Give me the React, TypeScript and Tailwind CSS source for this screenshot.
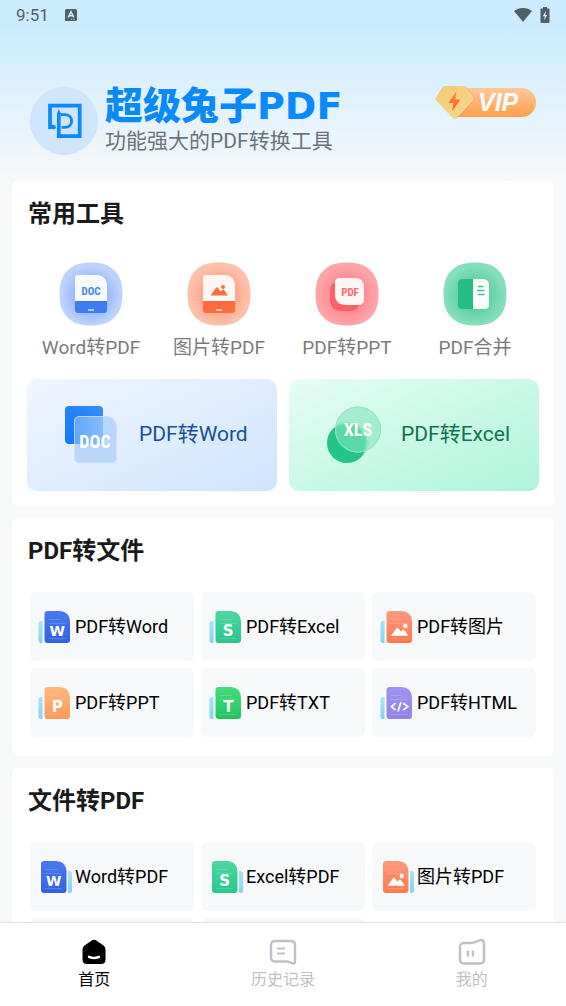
import type { ReactNode } from "react"

type Tone = "word" | "excel" | "image" | "ppt" | "txt" | "html"

interface FileTool {
  label: string
  tone: Tone
}

const TONES: Record<Tone, { from: string; to: string; letter?: string }> = {
  word: { from: "#4a78ee", to: "#3262e2", letter: "W" },
  excel: { from: "#4fd7a3", to: "#28c68c", letter: "S" },
  image: { from: "#ff9a80", to: "#fd7a4c" },
  ppt: { from: "#ffb97f", to: "#fb9a58", letter: "P" },
  txt: { from: "#45dc7c", to: "#1fc661", letter: "T" },
  html: { from: "#a195f2", to: "#8f82ea" },
}

const FROM_PDF: FileTool[] = [
  { label: "PDF转Word", tone: "word" },
  { label: "PDF转Excel", tone: "excel" },
  { label: "PDF转图片", tone: "image" },
  { label: "PDF转PPT", tone: "ppt" },
  { label: "PDF转TXT", tone: "txt" },
  { label: "PDF转HTML", tone: "html" },
]

const TO_PDF: FileTool[] = [
  { label: "Word转PDF", tone: "word" },
  { label: "Excel转PDF", tone: "excel" },
  { label: "图片转PDF", tone: "image" },
  { label: "PPT转PDF", tone: "ppt" },
  { label: "TXT转PDF", tone: "txt" },
]

const NARROW = "'Roboto Condensed', 'Liberation Sans Narrow', 'DejaVu Sans Condensed', sans-serif"

function StatusBar() {
  return (
    <div className="flex h-[30px] items-center justify-between px-4 text-[#4e5f68]">
      <div className="flex items-center gap-4">
        <span className="text-[17px] leading-6">9:51</span>
        <svg width="12" height="12" viewBox="0 0 12 12" aria-hidden="true">
          <rect width="12" height="12" rx="1.5" fill="#4e5f68" />
          <path d="M3.2 8.4 6 2.6l2.8 5.8M4.3 6.8h3.4" fill="none" stroke="#d3eefd" strokeWidth="1.4" />
          <path d="M6 10.4h1.2M8.4 10.4h1.2" stroke="#d3eefd" strokeWidth=".8" />
        </svg>
      </div>
      <div className="flex items-center gap-2">
        <svg width="18" height="14" viewBox="0 0 18 14" aria-hidden="true">
          <path d="M0 3C5-1 13-1 18 3L9 14Z" fill="#4e5f68" />
        </svg>
        <svg width="10" height="16" viewBox="0 0 10 16" aria-hidden="true">
          <path d="M3 0h4v1.6h1.6q.9 0 .9.9v12.6q0 .9-.9.9H1.4q-.9 0-.9-.9V2.500q0-.9.9-.9H3z" fill="#4e5f68" />
          <path d="M5.800 4 2.800 9.200h1.900L4.200 13.300l3-5.300H5.300z" fill="#d3eefd" />
        </svg>
      </div>
    </div>
  )
}

function Logo() {
  return (
    <svg width="68" height="68" viewBox="0 0 68 68" className="shrink-0" aria-hidden="true">
      <circle cx="34" cy="34" r="34" fill="#cfe5fb" />
      <path d="M25.500 40.200H20V18.700H49.700V49.200H28.800V26" fill="none" stroke="#0a89fb" strokeWidth="3.700" />
      <path d="M26.800 27.500 28.600 22l3 5.500z" fill="#0a89fb" />
      <path d="M22.500 37.200 26 40.600l-3.500 2z" fill="#0a89fb" />
      <path d="M31 27.600H34.500C44 27.600 44 40.400 34.500 40.400H31.500" fill="none" stroke="#0a89fb" strokeWidth="2.900" />
    </svg>
  )
}

function VipBadge() {
  return (
    <button type="button" aria-label="VIP" className="shrink-0">
      <svg width="101" height="34" viewBox="0 0 101 34" aria-hidden="true">
        <defs>
          <linearGradient id="vip-pill" x1="0" y1="0" x2="0" y2="1">
            <stop offset="0" stopColor="#ffc79a" />
            <stop offset="1" stopColor="#fd9f4a" />
          </linearGradient>
          <linearGradient id="vip-gem" x1="0" y1="0" x2="1" y2="1">
            <stop offset="0" stopColor="#f3c977" />
            <stop offset="1" stopColor="#f7d98e" />
          </linearGradient>
          <linearGradient id="vip-bolt" x1="0" y1="0" x2="0" y2="1">
            <stop offset="0" stopColor="#ff8a3c" />
            <stop offset="1" stopColor="#fb5f20" />
          </linearGradient>
        </defs>
        <path d="M22 3H86.500a14.500 14.500 0 0 1 0 29H22z" fill="url(#vip-pill)" />
        <path
          d="M10.500 1H29.500q1.500 0 2.500 1.200L39.600 12.200q1.200 1.600 0 3.200L23.500 32.400Q20.500 35 17.500 32.400L1.400 15.400q-1.200-1.600 0-3.200L8 2.200Q9 1 10.500 1z"
          fill="#e58d3c"
          opacity=".35"
        />
        <path
          d="M10 1H28.500q1.500 0 2.500 1.200L38.400 12q1.200 1.600 0 3.200L22.500 32.200Q19.800 34.500 17 32.200L1.400 15.200q-1.200-1.600 0-3.200L7.500 2.200Q8.500 1 10 1z"
          fill="url(#vip-gem)"
        />
        <path d="M21.500 6 13.500 18h5L17 26.500 25.300 14.500h-5z" fill="url(#vip-bolt)" />
        <text
          x="43"
          y="26"
          fill="#fff"
          fontSize="25"
          fontWeight="700"
          fontStyle="italic"
          fontFamily="'Liberation Sans', sans-serif"
        >
          VIP
        </text>
      </svg>
    </button>
  )
}

function Blob({ id, inner, outer, children }: { id: string; inner: string; outer: string; children: ReactNode }) {
  return (
    <svg width="64" height="64" viewBox="0 0 64 64" aria-hidden="true">
      <defs>
        <radialGradient id={id} cx=".5" cy=".52" r=".52">
          <stop offset=".3" stopColor={inner} />
          <stop offset=".9" stopColor={outer} />
        </radialGradient>
      </defs>
      <path
        d="M32 .5C42 .5 49.500 2.500 55.500 8.500S63.500 22 63.500 32 61.500 49.500 55.500 55.500 42 63.500 32 63.500 14.500 61.500 8.500 55.500.5 42 .5 32 2.500 14.500 8.500 8.500 22 .5 32 .5z"
        fill={`url(#${id})`}
      />
      {children}
    </svg>
  )
}

function DocIcon() {
  return (
    <Blob id="blob-doc" inner="#86adf8" outer="#bdd2fc">
      <path d="M19 13h18q11 0 11 12v15H16V16q0-3 3-3z" fill="#f7f9ff" />
      <path d="M16 39h32v9q0 3-3 3H19q-3 0-3-3z" fill="#3f7bf0" />
      <path d="M29 48h6" stroke="#fff" strokeWidth="1.200" />
      <text x="32" y="33" textAnchor="middle" fill="#4a83ee" fontSize="11" fontWeight="700" fontFamily={NARROW}>
        DOC
      </text>
    </Blob>
  )
}

function PictureIcon() {
  return (
    <Blob id="blob-picture" inner="#fb9c7d" outer="#fec0aa">
      <path d="M19 13h18q11 0 11 12v15H16V16q0-3 3-3z" fill="#fff7f4" />
      <path d="M16 39h32v9q0 3-3 3H19q-3 0-3-3z" fill="#fb6b3e" />
      <path d="M29 48h6" stroke="#fff" strokeWidth="1.200" />
      <path d="M23.500 33.500 29 25.800q1-1.200 2 0l2.600 3.800 1.700-1.700q.9-.8 1.700.2L41 33.500z" fill="#f9703f" />
      <circle cx="36" cy="25" r="2" fill="#f9703f" />
    </Blob>
  )
}

function PptIcon() {
  return (
    <Blob id="blob-ppt" inner="#fb8186" outer="#ffa4a8">
      <path d="M15 29q0-9 9-9h20v20q0 9-9 9H27q-12 0-12-12z" fill="#fb5f68" />
      <path d="M25 16h15q9 0 9 9v12q0 6-6 6H31q-11 0-11-11V21q0-5 5-5z" fill="#fff5f5" />
      <text x="35" y="34" textAnchor="middle" fill="#f76a72" fontSize="11" fontWeight="700" fontFamily={NARROW}>
        PDF
      </text>
    </Blob>
  )
}

function MergeIcon() {
  return (
    <Blob id="blob-merge" inner="#55cba0" outer="#85dfbb">
      <path d="M19 17h11v30H19q-4 0-4-4V21q0-4 4-4z" fill="#24bd85" />
      <path d="M30 17h10q6 0 6 6v20q0 4-4 4H30z" fill="#f8fffc" />
      <path d="M35 24.500h5.500M34 28.500h7.500M35 32.500h6.500" stroke="#3cc092" strokeWidth="1.500" />
    </Blob>
  )
}

function FeatureDocIcon() {
  return (
    <svg width="56" height="60" viewBox="0 0 56 60" aria-hidden="true">
      <defs>
        <linearGradient id="feature-doc" x1="0" y1="1" x2="1" y2="0">
          <stop offset="0" stopColor="#1278fb" />
          <stop offset="1" stopColor="#358df8" />
        </linearGradient>
        <linearGradient id="feature-doc-mix" x1="0" y1="0" x2="1" y2="0">
          <stop offset="0" stopColor="#63a7fb" />
          <stop offset="1" stopColor="#86bbfb" />
        </linearGradient>
      </defs>
      <rect x="0" y="1" width="38" height="38" rx="4" fill="url(#feature-doc)" />
      <path d="M15 11h24q13 0 13 13v28q0 6-6 6H15q-6 0-6-6V17q0-6 6-6z" fill="#b8d7fb" />
      <path d="M15 11h23v28H9V17q0-6 6-6z" fill="url(#feature-doc-mix)" />
      <path
        d="M15 11.500h23q13.500 0 13.500 13v27.500q0 5.500-5.500 5.500H15q-5.500 0-5.500-5.500V17q0-5.500 5.500-5.500z"
        fill="none"
        stroke="#cfe3fd"
        strokeOpacity=".7"
      />
      <text x="30" y="43" textAnchor="middle" fill="#fff" fontSize="18" fontWeight="700" fontFamily={NARROW}>
        DOC
      </text>
    </svg>
  )
}

function FeatureXlsIcon() {
  return (
    <svg width="56" height="60" viewBox="0 0 56 60" aria-hidden="true">
      <defs>
        <clipPath id="feature-xls-clip">
          <circle cx="31" cy="24.500" r="23" />
        </clipPath>
        <filter id="feature-xls-soft">
          <feGaussianBlur stdDeviation="1.500" />
        </filter>
      </defs>
      <circle cx="20" cy="38" r="20" fill="#25c489" />
      <circle cx="31" cy="24.500" r="23" fill="#a4edd0" />
      <g clipPath="url(#feature-xls-clip)">
        <circle cx="20" cy="38" r="20" fill="#5ad8a9" filter="url(#feature-xls-soft)" />
      </g>
      <circle cx="31" cy="24.500" r="22.500" fill="none" stroke="#8fe6c3" />
      <text x="31" y="31" textAnchor="middle" fill="#fff" fontSize="18" fontWeight="700" fontFamily={NARROW}>
        XLS
      </text>
    </svg>
  )
}

function FileIcon({ tone, id, flipped }: { tone: Tone; id: string; flipped: boolean }) {
  const { from, to, letter } = TONES[tone]
  return (
    <svg width="37" height="32" viewBox="0 0 37 32" className="shrink-0" aria-hidden="true">
      <defs>
        <linearGradient id={id} x1="0" y1="0" x2="0" y2="1">
          <stop offset="0" stopColor={from} />
          <stop offset="1" stopColor={to} />
        </linearGradient>
        <linearGradient id={`${id}-bar`} x1="0" y1="0" x2="0" y2="1">
          <stop offset="0" stopColor="#a9e4f7" />
          <stop offset="1" stopColor="#84d3f1" />
        </linearGradient>
      </defs>
      {flipped ? (
        <path d="M30 10h1.500q2.500 0 2.500 2.500v17q0 2.500-2.500 2.500H30z" fill={`url(#${id}-bar)`} />
      ) : (
        <path d="M4.500 10H3Q.5 10 .5 12.500v17Q.5 32 3 32h1.500z" fill={`url(#${id}-bar)`} />
      )}
      <g transform={flipped ? "translate(3 0)" : "translate(6.500 0)"}>
        <path d="M3 0h12.500q10 1 10 10.500v18.500q0 3-3 3H3q-3 0-3-3V3q0-3 3-3z" fill={`url(#${id})`} />
        <path d="M4 8.500h12M4 12.500h17M4 27.500h17" stroke="#fff" strokeOpacity=".16" />
        {letter && (
          <text
            x="12.750"
            y="25"
            textAnchor="middle"
            fill="#fff"
            fontSize={letter === "W" ? 14 : 15}
            fontWeight="700"
            fontFamily="'DejaVu Sans', sans-serif"
          >
            {letter}
          </text>
        )}
        {tone === "image" && (
          <>
            <path d="M4.500 24.800 10 17.200q.9-1.100 1.800 0l2.700 3.600 1.400-1.700q.9-1 1.800 0L22 24.800z" fill="#fff" />
            <circle cx="18.800" cy="15" r="2.200" fill="#fff" />
          </>
        )}
        {tone === "html" && (
          <path
            d="m9 16.200-4 3.400 4 3.400m7.800-6.800 4.500 3.400-4.500 3.400M14.500 15l-3 9.500"
            fill="none"
            stroke="#fff"
            strokeWidth="1.700"
          />
        )}
      </g>
    </svg>
  )
}

function Section({ title, children }: { title: string; children: ReactNode }) {
  return (
    <section className="rounded-md bg-white pt-[21px]">
      <h2 className="px-4 text-2xl leading-6 font-bold text-[#1a1a1a]">{title}</h2>
      {children}
    </section>
  )
}

function FileGrid({ tools, name, flipped = false }: { tools: FileTool[]; name: string; flipped?: boolean }) {
  return (
    <div className="mt-[29px] grid grid-cols-3 gap-[7px] px-[18px] pb-[19px]">
      {tools.map((tool) => (
        <button
          key={tool.label}
          type="button"
          className="flex h-[69px] items-center rounded-md bg-[#f7f8fa] pl-2 text-lg leading-6 whitespace-nowrap text-black"
        >
          <FileIcon tone={tool.tone} id={`${name}-${tool.tone}`} flipped={flipped} />
          {tool.label}
        </button>
      ))}
    </div>
  )
}

function QuickTool({ label, icon }: { label: string; icon: ReactNode }) {
  return (
    <button type="button" className="flex flex-col items-center gap-[10px] text-[19px] leading-6 text-[#7b7b7b]">
      {icon}
      {label}
    </button>
  )
}

function NavItem({ label, active = false, children }: { label: string; active?: boolean; children: ReactNode }) {
  return (
    <a
      href="#"
      aria-current={active ? "page" : undefined}
      className={`flex flex-1 flex-col items-center gap-[3px] pt-4 text-base leading-6 ${active ? "text-black" : "text-[#bfbfc7]"}`}
    >
      <svg width="28" height="26" viewBox="0 0 28 26" fill="none" aria-hidden="true">
        {children}
      </svg>
      {label}
    </a>
  )
}

export default function App() {
  return (
    <div className="flex h-screen flex-col bg-[#f7f8fa] font-[Roboto,'Noto_Sans_CJK_SC',sans-serif]">
      <main className="min-h-0 flex-1 overflow-y-auto [scrollbar-width:none]">
        <header className="bg-linear-to-b from-[#cbecff] from-15% to-[#f7f8fa] pb-6">
          <StatusBar />
          <div className="flex items-start px-[30px] pt-[55px]">
            <div className="flex flex-1 items-center gap-[7px]">
              <Logo />
              <div>
                <h1 className="h-9 font-['Noto_Sans_CJK_SC',sans-serif] text-[38px] leading-9 font-black whitespace-nowrap text-[#0a89fb]">
                  超级兔子<span className="font-['DejaVu_Sans',sans-serif] leading-none">PDF</span>
                </h1>
                <p className="mt-1 text-[21px] leading-8 whitespace-nowrap text-[#6c7378]">功能强大的PDF转换工具</p>
              </div>
            </div>
            <VipBadge />
          </div>
        </header>

        <div className="flex flex-col gap-3 px-3">
          <Section title="常用工具">
            <div className="mt-9 grid grid-cols-4 px-[15px]">
              <QuickTool label="Word转PDF" icon={<DocIcon />} />
              <QuickTool label="图片转PDF" icon={<PictureIcon />} />
              <QuickTool label="PDF转PPT" icon={<PptIcon />} />
              <QuickTool label="PDF合并" icon={<MergeIcon />} />
            </div>
            <div className="mt-[19px] grid grid-cols-2 gap-3 px-[15px] pb-[15px]">
              <button
                type="button"
                className="flex h-28 items-center gap-[18px] rounded-[10px] bg-linear-to-br from-[#f0f6ff] to-[#cfe5fe] pl-[38px] text-[21px] text-[#174f9c]"
              >
                <FeatureDocIcon />
                PDF转Word
              </button>
              <button
                type="button"
                className="flex h-28 items-center gap-[18px] rounded-[10px] bg-linear-to-br from-[#e6fdf5] to-[#aef4da] pl-[38px] text-[21px] text-[#0f7350]"
              >
                <FeatureXlsIcon />
                PDF转Excel
              </button>
            </div>
          </Section>

          <Section title="PDF转文件">
            <FileGrid tools={FROM_PDF} name="from-pdf" />
          </Section>

          <Section title="文件转PDF">
            <FileGrid tools={TO_PDF} name="to-pdf" flipped />
          </Section>
        </div>
      </main>

      <nav className="flex h-[84px] shrink-0 border-t border-[#e3e3e8] bg-white">
        <NavItem label="首页" active>
          <path
            d="M11.800 1.500Q14 .2 16.200 1.500L23.500 6.500Q25.500 8 25.500 10.500V20.500Q25.500 25 21 25H7Q2.500 25 2.500 20.500V10.500Q2.500 8 4.500 6.500z"
            fill="#000"
          />
          <path d="M9 17.800q5 2.400 10 0" stroke="#fff" strokeWidth="2.400" strokeLinecap="round" />
        </NavItem>
        <NavItem label="历史记录">
          <path
            d="M6 2H22Q26 2 26 6V22.500Q26 25.200 23.500 24.400L18.500 22.500H6Q2 22.500 2 18.500V6Q2 2 6 2z"
            stroke="#bfbfc7"
            strokeWidth="2.400"
          />
          <path d="M8 9.500h8M8 14.500h8" stroke="#bfbfc7" strokeWidth="2.200" />
        </NavItem>
        <NavItem label="我的">
          <path
            d="M6 4H13Q15 4 17 3L22 1.200Q26 .5 26 4V20.500Q26 24.500 22 24.500H6Q2 24.500 2 20.500V8Q2 4 6 4z"
            stroke="#bfbfc7"
            strokeWidth="2.400"
          />
          <path d="M10 11.500v6M15 11.500v6" stroke="#bfbfc7" strokeWidth="2.400" />
        </NavItem>
      </nav>
    </div>
  )
}
